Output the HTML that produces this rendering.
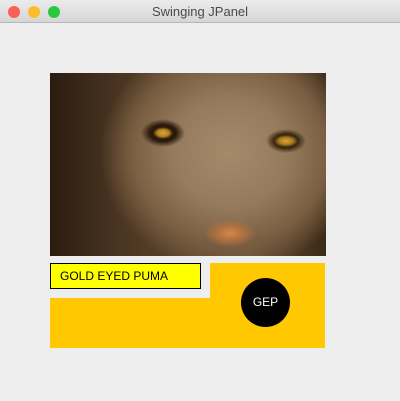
<!DOCTYPE html>
<html><head><style>
body{margin:0;width:400px;height:401px;background:#eeeeee;font-family:"Liberation Sans",sans-serif;position:relative;overflow:hidden}
.tb{position:absolute;left:0;top:0;width:400px;height:22px;background:linear-gradient(#ebebeb,#d6d6d6);border-bottom:1px solid #b8b8b8;text-align:center;font-size:13px;line-height:23px;color:#4a4a4a}
.d{position:absolute;top:6px;width:12px;height:12px;border-radius:50%}
.img{position:absolute;left:50px;top:73px;width:276px;height:183px;overflow:hidden;
background:
radial-gradient(ellipse 10px 6px at 113px 60px,#d7a63a 0,#b08020 60%,transparent 100%),
radial-gradient(ellipse 12px 6px at 236px 68px,#d9a83a 0,#a87a20 60%,transparent 100%),
radial-gradient(ellipse 22px 14px at 113px 60px,#2a1a0c 0,#2a1a0c 60%,transparent 100%),
radial-gradient(ellipse 20px 12px at 236px 68px,#3a2810 0,#3a2810 60%,transparent 100%),
radial-gradient(ellipse 26px 14px at 180px 160px,#d08a4a 0,#b07040 50%,transparent 100%),
radial-gradient(ellipse 130px 120px at 180px 80px,#a58a6a 0,#957a5c 45%,#7a5f42 75%,transparent 100%),
linear-gradient(90deg,#2a1c10,#4a3522 25%,#6a5238 70%,#3a2a18)}
.yp{position:absolute;left:50px;top:263px;width:275px;height:85px;background:#ffc800}
.notch{position:absolute;left:50px;top:263px;width:160px;height:35px;background:#eeeeee}
.lab{position:absolute;left:50px;top:263px;height:24px;background:#ffff00;border:1px solid #000;font-size:12px;line-height:24px;padding-left:9px;width:140px}
.c{position:absolute;left:241px;top:278px;width:49px;height:49px;border-radius:50%;background:#000;color:#fff;font-size:12px;line-height:49px;text-align:center}
</style></head><body>
<div class="tb">Swinging JPanel</div>
<div class="d" style="left:8px;background:#fc5f57"></div>
<div class="d" style="left:28px;background:#fdbc2e"></div>
<div class="d" style="left:48px;background:#29c840"></div>
<div class="img"></div>
<div class="yp"></div><div class="notch"></div>
<div class="lab">GOLD EYED PUMA</div>
<div class="c">GEP</div>
</body></html>
